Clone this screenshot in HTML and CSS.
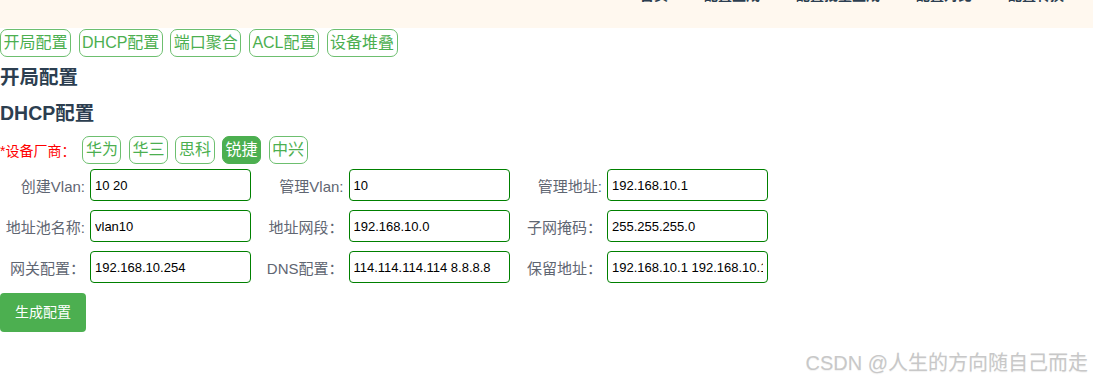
FILE: index.html
```html
<!DOCTYPE html>
<html lang="zh-CN">
<head>
<meta charset="utf-8">
<title>配置生成</title>
<link rel="stylesheet" href="styles.css">
</head>
<body>
<header class="topbar">
  <nav class="nav">
    <a class="nav-item">首页</a>
    <a class="nav-item">配置生成</a>
    <a class="nav-item">配置批量生成</a>
    <a class="nav-item">配置对比</a>
    <a class="nav-item">配置转换</a>
  </nav>
</header>
<main class="page">
  <div class="chips">
    <button class="chip">开局配置</button>
    <button class="chip">DHCP配置</button>
    <button class="chip">端口聚合</button>
    <button class="chip">ACL配置</button>
    <button class="chip">设备堆叠</button>
  </div>
  <h3 class="section-title first">开局配置</h3>
  <h3 class="section-title">DHCP配置</h3>
  <div class="vendor-row">
    <span class="vendor-label">*设备厂商：</span>
    <div class="chips">
      <button class="chip">华为</button>
      <button class="chip">华三</button>
      <button class="chip">思科</button>
      <button class="chip active">锐捷</button>
      <button class="chip">中兴</button>
    </div>
  </div>
  <div class="form">
    <div class="form-row">
      <label class="field"><span class="field-label">创建Vlan:</span><input class="field-input" value="10 20"></label>
      <label class="field"><span class="field-label">管理Vlan:</span><input class="field-input" value="10"></label>
      <label class="field"><span class="field-label">管理地址:</span><input class="field-input" value="192.168.10.1"></label>
    </div>
    <div class="form-row">
      <label class="field"><span class="field-label">地址池名称:</span><input class="field-input" value="vlan10"></label>
      <label class="field"><span class="field-label">地址网段：</span><input class="field-input" value="192.168.10.0"></label>
      <label class="field"><span class="field-label">子网掩码：</span><input class="field-input" value="255.255.255.0"></label>
    </div>
    <div class="form-row">
      <label class="field"><span class="field-label">网关配置：</span><input class="field-input" value="192.168.10.254"></label>
      <label class="field"><span class="field-label">DNS配置：</span><input class="field-input" value="114.114.114.114 8.8.8.8"></label>
      <label class="field"><span class="field-label">保留地址：</span><input class="field-input" value="192.168.10.1 192.168.10.100"></label>
    </div>
  </div>
  <button class="primary">生成配置</button>
</main>
<div class="watermark">CSDN @人生的方向随自己而走</div>
</body>
</html>
```
FILE: styles.css
```css
* { box-sizing: border-box; }
html, body {
  margin: 0;
  padding: 0;
  background: #fff;
  font-family: "Liberation Sans", "Noto Sans CJK SC", sans-serif;
  color: #2c3e50;
}
body { position: relative; height: 381px; overflow: hidden; }

.topbar {
  height: 28px;
  background: #fff8ef;
  overflow: hidden;
}
.nav {
  display: flex;
  justify-content: flex-end;
  gap: 36px;
  padding-right: 29px;
  margin-top: -15px;
  font-size: 14px;
  line-height: 20px;
  font-weight: bold;
}
.nav-item { color: #2c3e50; }

.page { padding-top: 1px; }

.chips {
  display: flex;
  gap: 7.5px;
}
.chip {
  font-family: inherit;
  font-size: 16px;
  line-height: 22px;
  padding: 2px 2.5px;
  border: 1px solid #6dbf6f;
  border-radius: 7px;
  background: #fff;
  color: #4caf50;
  cursor: pointer;
}
.chip.active {
  background: #4caf50;
  border-color: #4caf50;
  color: #fff;
}

.section-title {
  margin: 0 0 10px;
  font-size: 19.5px;
  line-height: 26px;
  font-weight: bold;
  color: #2c3e50;
}
.section-title.first { margin-top: 7px; }

.vendor-row {
  display: flex;
  align-items: center;
  margin-top: 0.5px;
}
.vendor-label {
  color: #f00;
  font-size: 14px;
  margin-right: 7px;
}

.form {
  display: flex;
  flex-direction: column;
  gap: 9px;
  margin-top: 5px;
}
.form-row {
  display: flex;
  gap: 7.5px;
}
.field {
  display: flex;
  align-items: center;
}
.field-label {
  width: 85px;
  margin-right: 5px;
  text-align: right;
  font-size: 15px;
  color: #5f6672;
  white-space: nowrap;
}
.field-input {
  width: 161px;
  height: 32px;
  padding: 0 4px;
  border: 1px solid #008000;
  border-radius: 4px;
  font-family: "Liberation Sans", "Noto Sans CJK SC", sans-serif;
  font-size: 13px;
  color: #000;
  background: #fff;
  outline: none;
}

.primary {
  margin-top: 10px;
  padding: 10px 15px;
  border: none;
  border-radius: 4px;
  background: #4caf50;
  color: #fff;
  font-family: inherit;
  font-size: 14px;
  line-height: 19px;
  cursor: pointer;
}

.watermark {
  position: absolute;
  right: 5px;
  bottom: 5px;
  font-size: 20px;
  color: #c8c8c8;
  text-shadow: 0 1px 1px rgba(0,0,0,0.06);
  white-space: nowrap;
}
```
